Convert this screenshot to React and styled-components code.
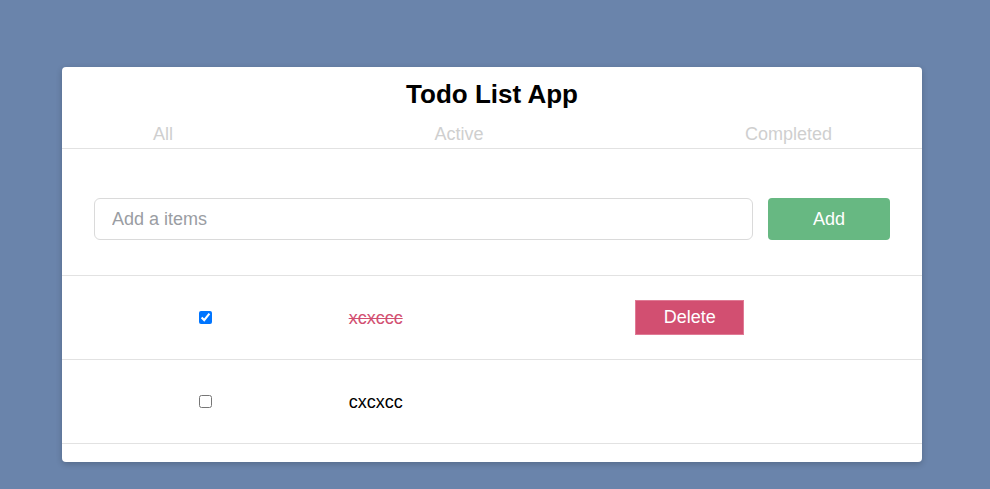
import React, { useState } from "react";
import styled, { createGlobalStyle } from "styled-components";

const GlobalStyle = createGlobalStyle`
  html, body {
    margin: 0;
    padding: 0;
    background: #6a84ab;
    font-family: "Liberation Sans", Arial, sans-serif;
  }
`;

const Page = styled.div`
  min-height: 489px;
  padding: 67px 68px 0 62px;
  box-sizing: border-box;
`;

const Card = styled.div`
  width: 860px;
  background: #fff;
  border-radius: 4px;
  box-shadow: 0 2px 6px rgba(0, 0, 0, 0.2);
  padding: 14px 0 18px;
  box-sizing: border-box;
`;

const Title = styled.h1`
  margin: 0;
  text-align: center;
  font-size: 26px;
  line-height: 27px;
  font-weight: 700;
  color: #000;
`;

const Tabs = styled.div`
  display: flex;
  justify-content: space-between;
  padding: 0 90px 3px 91px;
  margin-top: 16px;
  border-bottom: 1px solid #e2e2e2;
`;

const Tab = styled.span`
  font-size: 18px;
  line-height: 21px;
  color: ${(p) => (p.$active ? "#888" : "#cfcfcf")};
  cursor: pointer;
`;

const Form = styled.form`
  display: flex;
  gap: 15px;
  padding: 49px 32px 35px;
  border-bottom: 1px solid #e2e2e2;
`;

const Input = styled.input`
  flex: 1;
  height: 42px;
  box-sizing: border-box;
  border: 1px solid #dadada;
  border-radius: 6px;
  padding: 0 17px;
  font-family: inherit;
  font-size: 18px;
  outline: none;
  &::placeholder {
    color: #9a9da3;
  }
`;

const AddButton = styled.button`
  width: 122px;
  height: 42px;
  border: none;
  border-radius: 4px;
  background: #67b882;
  color: #fff;
  font-family: inherit;
  font-size: 18px;
  cursor: pointer;
`;

const Row = styled.div`
  display: grid;
  grid-template-columns: repeat(3, 1fr);
  align-items: center;
  height: 83px;
  border-bottom: 1px solid #e2e2e2;
`;

const CheckCell = styled.div`
  display: flex;
  justify-content: center;
`;

const ItemText = styled.span`
  font-size: 18px;
  padding-top: 2px;
  color: ${(p) => (p.$done ? "#d24f71" : "#000")};
  text-decoration: ${(p) => (p.$done ? "line-through" : "none")};
`;

const DeleteButton = styled.button`
  justify-self: start;
  width: 109px;
  height: 35px;
  border: 1px solid #e07a95;
  border-radius: 0;
  background: #d24f71;
  color: #fff;
  font-family: inherit;
  font-size: 18px;
  cursor: pointer;
`;

export default function App() {
  const [items, setItems] = useState([
    { id: 1, text: "xcxccc", done: true },
    { id: 2, text: "cxcxcc", done: false },
  ]);

  const toggle = (id) =>
    setItems(items.map((i) => (i.id === id ? { ...i, done: !i.done } : i)));

  return (
    <Page>
      <GlobalStyle />
      <Card>
        <Title>Todo List App</Title>
        <Tabs>
          <Tab>All</Tab>
          <Tab>Active</Tab>
          <Tab>Completed</Tab>
        </Tabs>
        <Form onSubmit={(e) => e.preventDefault()}>
          <Input placeholder="Add a items" />
          <AddButton type="submit">Add</AddButton>
        </Form>
        {items.map((item) => (
          <Row key={item.id}>
            <CheckCell>
              <input
                type="checkbox"
                checked={item.done}
                onChange={() => toggle(item.id)}
              />
            </CheckCell>
            <ItemText $done={item.done}>{item.text}</ItemText>
            {item.done && (
              <DeleteButton
                onClick={() => setItems(items.filter((i) => i.id !== item.id))}
              >
                Delete
              </DeleteButton>
            )}
          </Row>
        ))}
      </Card>
    </Page>
  );
}
